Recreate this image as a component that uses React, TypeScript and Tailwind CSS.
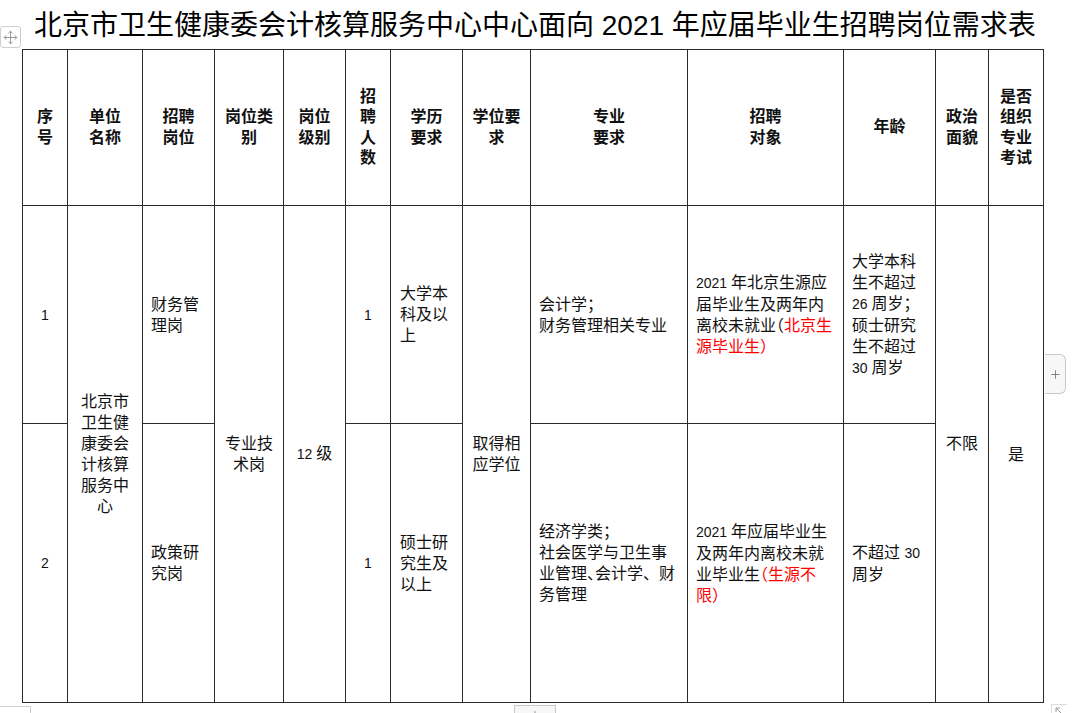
import React from "react";
import { Move, Plus } from "lucide-react";

type C = { children?: React.ReactNode };

const N = ({ children }: C) => <span className="text-[14px]">{children}</span>;
const H = ({ children }: C) => <span className="[font-feature-settings:'halt']">{children}</span>;
const R = ({ children }: C) => <span className="text-[#ff0000]">{children}</span>;
const Lines = ({ l }: { l: React.ReactNode[] }) => (
  <>
    {l.map((x, i) => (
      <div key={i}>{x}</div>
    ))}
  </>
);

const th =
  "border border-[#2a2a2a] p-0 align-middle text-center font-bold text-[16px] leading-[20.5px]";
const td = "border border-[#2a2a2a] p-0 align-middle text-[16px] leading-[21px]";

export default function App() {
  return (
    <div className="relative w-[1080px] h-[713px] overflow-hidden bg-white text-[#111] font-['Liberation_Sans','Noto_Sans_CJK_SC',sans-serif]">
      <div className="h-[49px] pl-[34px] pt-[7px] text-[28px] leading-[38px] whitespace-nowrap text-black">
        北京市卫生健康委会计核算服务中心中心面向 2021 年应届毕业生招聘岗位需求表
      </div>

      <table className="ml-[22px] border-collapse table-fixed w-[1022px]">
        <colgroup>
          <col className="w-[45px]" />
          <col className="w-[75px]" />
          <col className="w-[72px]" />
          <col className="w-[69px]" />
          <col className="w-[62px]" />
          <col className="w-[45px]" />
          <col className="w-[72px]" />
          <col className="w-[68px]" />
          <col className="w-[157px]" />
          <col className="w-[156px]" />
          <col className="w-[92px]" />
          <col className="w-[53px]" />
          <col className="w-[55px]" />
        </colgroup>
        <tbody>
          <tr className="h-[156px]">
            <td className={th}><Lines l={["序", "号"]} /></td>
            <td className={th}><Lines l={["单位", "名称"]} /></td>
            <td className={th}><Lines l={["招聘", "岗位"]} /></td>
            <td className={th}><Lines l={["岗位类", "别"]} /></td>
            <td className={th}><Lines l={["岗位", "级别"]} /></td>
            <td className={th}><Lines l={["招", "聘", "人", "数"]} /></td>
            <td className={th}><Lines l={["学历", "要求"]} /></td>
            <td className={th}><Lines l={["学位要", "求"]} /></td>
            <td className={th}><Lines l={["专业", "要求"]} /></td>
            <td className={th}><Lines l={["招聘", "对象"]} /></td>
            <td className={th}><Lines l={["年龄"]} /></td>
            <td className={th}><Lines l={["政治", "面貌"]} /></td>
            <td className={th}><Lines l={["是否", "组织", "专业", "考试"]} /></td>
          </tr>

          <tr className="h-[218px]">
            <td className={`${td} text-center`}><N>1</N></td>
            <td rowSpan={2} className={`${td} text-center`}>
              <Lines l={["北京市", "卫生健", "康委会", "计核算", "服务中", "心"]} />
            </td>
            <td className={`${td} pl-[8px] leading-[20px]`}>
              <Lines l={["财务管", "理岗"]} />
            </td>
            <td rowSpan={2} className={`${td} text-center leading-[20px]`}>
              <Lines l={["专业技", "术岗"]} />
            </td>
            <td rowSpan={2} className={`${td} text-center`}>
              <N>12 </N>级
            </td>
            <td className={`${td} text-center`}><N>1</N></td>
            <td className={`${td} pl-[9px] leading-[20px]`}>
              <Lines l={["大学本", "科及以", "上"]} />
            </td>
            <td rowSpan={2} className={`${td} text-center leading-[20px]`}>
              <Lines l={["取得相", "应学位"]} />
            </td>
            <td className={`${td} pl-[8px]`}>
              <Lines l={["会计学；", "财务管理相关专业"]} />
            </td>
            <td className={`${td} pl-[8px]`}>
              <Lines
                l={[
                  <><N>2021 </N>年北京生源应</>,
                  "届毕业生及两年内",
                  <>离校未就业<H>（</H><R>北京生</R></>,
                  <R>源毕业生）</R>,
                ]}
              />
            </td>
            <td className={`${td} pl-[8px] leading-[20.6px]`}>
              <Lines
                l={[
                  "大学本科",
                  "生不超过",
                  <><N>26 </N>周岁；</>,
                  "硕士研究",
                  "生不超过",
                  <><N>30 </N>周岁</>,
                ]}
              />
            </td>
            <td rowSpan={2} className={`${td} text-center pb-[22px]`}>不限</td>
            <td rowSpan={2} className={`${td} text-center`}>是</td>
          </tr>

          <tr className="h-[279px]">
            <td className={`${td} text-center`}><N>2</N></td>
            <td className={`${td} pl-[8px] leading-[20px]`}>
              <Lines l={["政策研", "究岗"]} />
            </td>
            <td className={`${td} text-center`}><N>1</N></td>
            <td className={`${td} pl-[9px] leading-[20px]`}>
              <Lines l={["硕士研", "究生及", "以上"]} />
            </td>
            <td className={`${td} pl-[8px]`}>
              <Lines
                l={[
                  "经济学类；",
                  "社会医学与卫生事",
                  <>业管理<H>、</H>会计学、财</>,
                  "务管理",
                ]}
              />
            </td>
            <td className={`${td} pl-[8px]`}>
              <Lines
                l={[
                  <><N>2021 </N>年应届毕业生</>,
                  "及两年内离校未就",
                  <>业毕业生<R><H>（</H>生源不</R></>,
                  <R>限）</R>,
                ]}
              />
            </td>
            <td className={`${td} pl-[8px]`}>
              <Lines l={[<>不超过 <N>30</N></>, "周岁"]} />
            </td>
          </tr>
        </tbody>
      </table>

      {/* table move handle */}
      <div className="absolute left-0 top-[26px] w-[21px] h-[22px] rounded-[3px] border border-[#cfcfcf] bg-white flex items-center justify-center">
        <Move size={15} strokeWidth={1.4} color="#8a8a8a" />
      </div>

      {/* add column tab */}
      <div className="absolute left-[1045px] top-[354px] w-[21px] h-[40px] rounded-r-[6px] border border-l-0 border-[#c9c9c9] bg-[#f7f7f7] flex items-center justify-center">
        <Plus size={13} strokeWidth={1.5} color="#6f6f6f" />
      </div>

      {/* add row tab */}
      <div className="absolute left-[514px] top-[705px] w-[42px] h-[20px] border border-[#c9c9c9] bg-[#f7f7f7] flex justify-center">
        <Plus size={12} strokeWidth={1.5} color="#6f6f6f" className="mt-[3px]" />
      </div>

      {/* bottom-left box */}
      <div className="absolute left-[-1px] top-[706px] w-[32px] h-[20px] border border-[#d0d0d0] bg-white" />

      {/* resize handle */}
      <div className="absolute left-[1051px] top-[704px] w-[16px] h-[16px] border-l border-t border-[#dcdcdc] bg-white">
        <svg width="10" height="10" viewBox="0 0 10 10" className="ml-[3px] mt-[2px]">
          <path d="M1 1 H5 M1 1 V5 M1 1 L6 6" stroke="#9a9a9a" strokeWidth="1" fill="none" />
        </svg>
      </div>
    </div>
  );
}
